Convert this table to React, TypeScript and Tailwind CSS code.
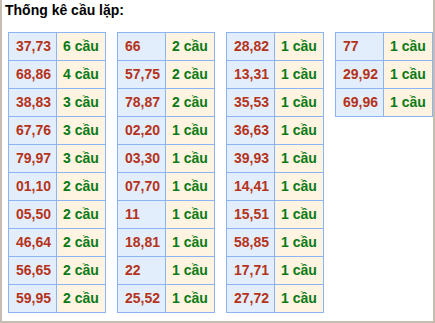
const tables: [string, string][][] = [
  [
    ['37,73', '6 cầu'],
    ['68,86', '4 cầu'],
    ['38,83', '3 cầu'],
    ['67,76', '3 cầu'],
    ['79,97', '3 cầu'],
    ['01,10', '2 cầu'],
    ['05,50', '2 cầu'],
    ['46,64', '2 cầu'],
    ['56,65', '2 cầu'],
    ['59,95', '2 cầu'],
  ],
  [
    ['66', '2 cầu'],
    ['57,75', '2 cầu'],
    ['78,87', '2 cầu'],
    ['02,20', '1 cầu'],
    ['03,30', '1 cầu'],
    ['07,70', '1 cầu'],
    ['11', '1 cầu'],
    ['18,81', '1 cầu'],
    ['22', '1 cầu'],
    ['25,52', '1 cầu'],
  ],
  [
    ['28,82', '1 cầu'],
    ['13,31', '1 cầu'],
    ['35,53', '1 cầu'],
    ['36,63', '1 cầu'],
    ['39,93', '1 cầu'],
    ['14,41', '1 cầu'],
    ['15,51', '1 cầu'],
    ['58,85', '1 cầu'],
    ['17,71', '1 cầu'],
    ['27,72', '1 cầu'],
  ],
  [
    ['77', '1 cầu'],
    ['29,92', '1 cầu'],
    ['69,96', '1 cầu'],
  ],
]

export default function App() {
  return (
    <div
      className="w-[435px] h-[323px] bg-white border-l-2 border-r-2 border-b-2 border-[#c6bdb0] overflow-hidden"
      style={{ fontFamily: '"Liberation Sans", Arial, sans-serif' }}
    >
      <div className="pl-[3px] pt-[2px] text-[14px] leading-[17px] font-bold text-black">
        Thống kê cầu lặp:
      </div>
      <div className="flex items-start gap-[11px] pl-[6px] mt-[13px]">
        {tables.map((rows, i) => (
          <div key={i} className="border-l border-t border-[#8db3f2]">
            {rows.map(([num, count]) => (
              <div key={num} className="flex h-[28px] text-[14px] font-bold">
                <div className="w-[48px] flex items-center pl-[7px] bg-[#e3eefd] text-[#b5331b] border-r border-b border-[#8db3f2]">
                  {num}
                </div>
                <div className="w-[49px] flex items-center pl-[6px] bg-[#fff4e1] text-[#0b7a16] border-r border-b border-[#8db3f2]">
                  {count}
                </div>
              </div>
            ))}
          </div>
        ))}
      </div>
    </div>
  )
}
